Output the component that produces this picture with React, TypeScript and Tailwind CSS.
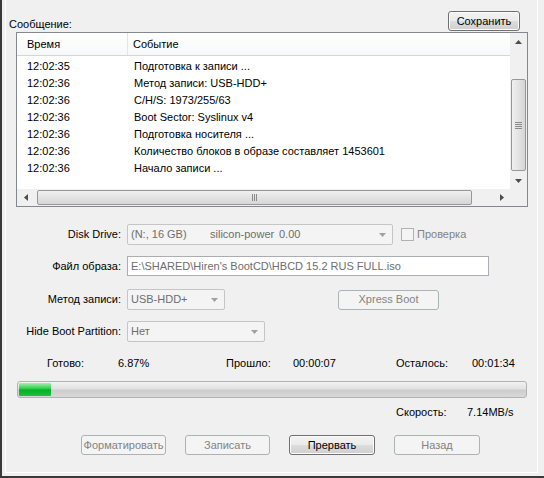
import React from 'react';

// Окно записи образа на диск (стиль Windows 7)

const font = { fontFamily: '"Liberation Sans", Arial, sans-serif' };

const logRows: [string, string][] = [
  ['12:02:35', 'Подготовка к записи ...'],
  ['12:02:36', 'Метод записи: USB-HDD+'],
  ['12:02:36', 'C/H/S: 1973/255/63'],
  ['12:02:36', 'Boot Sector: Syslinux v4'],
  ['12:02:36', 'Подготовка носителя ...'],
  ['12:02:36', 'Количество блоков в образе составляет 1453601'],
  ['12:02:36', 'Начало записи ...'],
];

const Arrow = ({ dir, color = '#4d4d4d' }: { dir: 'up' | 'down' | 'left' | 'right'; color?: string }) => {
  const pts = {
    up: '0,4 3.5,0 7,4',
    down: '0,0 7,0 3.5,4',
    left: '4,0 4,7 0,3.5',
    right: '0,0 0,7 4,3.5',
  }[dir];
  const vertical = dir === 'up' || dir === 'down';
  return (
    <svg width={vertical ? 7 : 4} height={vertical ? 4 : 7} viewBox={vertical ? '0 0 7 4' : '0 0 4 7'}>
      <polygon points={pts} fill={color} />
    </svg>
  );
};

const Button = ({ label, disabled, className = '' }: { label: string; disabled?: boolean; className?: string }) => (
  <div
    className={`flex h-[20px] items-center justify-center rounded-[3px] border text-[11px] ${
      disabled
        ? 'border-[#adb2b5] bg-[#f4f4f4] text-[#838383]'
        : 'border-[#707070] bg-[linear-gradient(#f2f2f2_0%,#ebebeb_50%,#dddddd_51%,#cfcfcf_100%)] text-black shadow-[inset_0_0_0_1px_#fcfcfc]'
    } ${className}`}
  >
    {label}
  </div>
);

const Combo = ({ children, className = '' }: { children: React.ReactNode; className?: string }) => (
  <div
    className={`flex h-[21px] items-center rounded-[2px] border border-[#c5c5c5] bg-[#f4f4f4] pl-[3px] pr-[6px] text-[11px] text-[#6d6d6d] ${className}`}
  >
    <div className="flex min-w-0 flex-1 items-center">{children}</div>
    <Arrow dir="down" color="#a0a0a0" />
  </div>
);

const FormRow = ({ label, children, className = '' }: { label: string; children: React.ReactNode; className?: string }) => (
  <div className={`flex items-center ${className}`}>
    <div className="w-[116px] pr-[1px] text-right text-[11px] text-black">{label}</div>
    <div className="ml-[5px] flex items-center">{children}</div>
  </div>
);

export default function App() {
  return (
    <div className="h-[478px] w-[544px] border-b-2 border-l-2 border-[#3a3a3a] bg-[#f0f0f0] pb-[3px] pl-[3px] pr-[6px]" style={font}>
      <div className="flex h-full flex-col border-b border-l border-r border-white">
        {/* Заголовок списка и кнопка сохранения */}
        <div className="mt-[11px] flex h-[20px] items-end">
          <span className="ml-[3px] text-[11px] leading-[14px] text-black">Сообщение:</span>
          <Button label="Сохранить" className="ml-auto mr-[17px] w-[72px]" />
        </div>

        {/* Журнал */}
        <div className="ml-[10px] mt-[1px] grid h-[175px] w-[512px] grid-cols-[1fr_17px] grid-rows-[1fr_17px] border border-[#828790] bg-white">
          <div className="overflow-hidden">
            <div className="flex h-[23px] items-center border-b border-[#d5d5d5] bg-[linear-gradient(#ffffff,#f7f8f9)] text-[11px] text-black">
              <div className="h-full w-[111px] border-r border-[#e5e5e5] pl-[10px] leading-[23px]">Время</div>
              <div className="pl-[5px]">Событие</div>
            </div>
            <div className="pt-[2px]">
              {logRows.map(([time, event], i) => (
                <div key={i} className="flex h-[17px] items-center whitespace-nowrap text-[11px] text-black">
                  <span className="w-[117px] pl-[10px]">{time}</span>
                  <span>{event}</span>
                </div>
              ))}
            </div>
          </div>

          {/* Вертикальная полоса прокрутки */}
          <div className="flex flex-col items-center bg-[#f0f0f0]">
            <div className="flex h-[17px] items-center justify-center">
              <Arrow dir="up" />
            </div>
            <div className="mt-[29px] flex h-[92px] w-[15px] items-center justify-center rounded-[2px] border border-[#979797] bg-[linear-gradient(90deg,#f0f0f0,#e3e3e3_50%,#d6d6d6)]">
              <div className="flex flex-col gap-[1px]">
                <div className="h-[1px] w-[7px] bg-[#8a8a8a]" />
                <div className="h-[1px] w-[7px] bg-[#8a8a8a]" />
                <div className="h-[1px] w-[7px] bg-[#8a8a8a]" />
                <div className="h-[1px] w-[7px] bg-[#8a8a8a]" />
              </div>
            </div>
            <div className="mt-auto flex h-[17px] items-center justify-center">
              <Arrow dir="down" />
            </div>
          </div>

          {/* Горизонтальная полоса прокрутки */}
          <div className="flex items-center bg-[#f0f0f0]">
            <div className="flex w-[17px] justify-center">
              <Arrow dir="left" />
            </div>
            <div className="ml-[3px] flex h-[15px] w-[435px] items-center justify-center rounded-[2px] border border-[#979797] bg-[linear-gradient(#f0f0f0,#e3e3e3_50%,#d6d6d6)]">
              <div className="flex gap-[1px]">
                <div className="h-[7px] w-[1px] bg-[#8a8a8a]" />
                <div className="h-[7px] w-[1px] bg-[#8a8a8a]" />
                <div className="h-[7px] w-[1px] bg-[#8a8a8a]" />
              </div>
            </div>
            <div className="ml-auto flex w-[17px] justify-center">
              <Arrow dir="right" />
            </div>
          </div>
          <div className="bg-[#f0f0f0]" />
        </div>

        {/* Параметры записи */}
        <FormRow label="Disk Drive:" className="mt-[17px]">
          <Combo className="w-[266px]">
            <span className="w-[79px]">(N:, 16 GB)</span>
            <span className="w-[69px]">silicon-power</span>
            <span>0.00</span>
          </Combo>
          <div className="ml-[8px] h-[13px] w-[13px] border border-[#b1b1b1] bg-[#f4f4f4]" />
          <span className="ml-[3px] text-[11px] text-[#838383]">Проверка</span>
        </FormRow>

        <FormRow label="Файл образа:" className="mt-[11px]">
          <div className="flex h-[20px] w-[362px] items-center border border-[#abadb3] bg-white pl-[3px] text-[11px] text-[#6d6d6d]">
            E:\SHARED\Hiren's BootCD\HBCD 15.2 RUS FULL.iso
          </div>
        </FormRow>

        <FormRow label="Метод записи:" className="mt-[13px]">
          <Combo className="w-[98px]">USB-HDD+</Combo>
          <Button label="Xpress Boot" disabled className="ml-[113px] w-[101px]" />
        </FormRow>

        <FormRow label="Hide Boot Partition:" className="mt-[11px]">
          <Combo className="w-[138px]">Нет</Combo>
        </FormRow>

        {/* Прогресс */}
        <div className="mt-[14px] flex h-[15px] items-center text-[11px] text-black">
          <span className="ml-[41px] w-[71px]">Готово:</span>
          <span className="w-[108px]">6.87%</span>
          <span className="w-[67px]">Прошло:</span>
          <span className="w-[103px]">00:00:07</span>
          <span className="w-[76px]">Осталось:</span>
          <span>00:01:34</span>
        </div>

        <div className="ml-[11px] mt-[10px] h-[17px] w-[510px] overflow-hidden rounded-[3px] border border-[#b2b2b2] bg-[linear-gradient(#f3f3f3,#e2e2e2_45%,#cdcdcd_55%,#d9d9d9)] p-[1px]">
          <div className="h-full w-[32px] rounded-[1px] bg-[linear-gradient(#a6eeb3,#37d253_40%,#06b025_55%,#1bc13c)]" />
        </div>

        <div className="mt-[7px] flex h-[14px] items-center text-[11px] text-black">
          <span className="ml-[390px] w-[71px]">Скорость:</span>
          <span>7.14MB/s</span>
        </div>

        {/* Кнопки */}
        <div className="ml-[75px] mt-[16px] flex gap-[19px]">
          <Button label="Форматировать" disabled className="w-[85px] border-[#8a8a8a]" />
          <Button label="Записать" disabled className="w-[85px]" />
          <Button label="Прервать" className="w-[86px]" />
          <Button label="Назад" disabled className="w-[86px]" />
        </div>
      </div>
    </div>
  );
}
